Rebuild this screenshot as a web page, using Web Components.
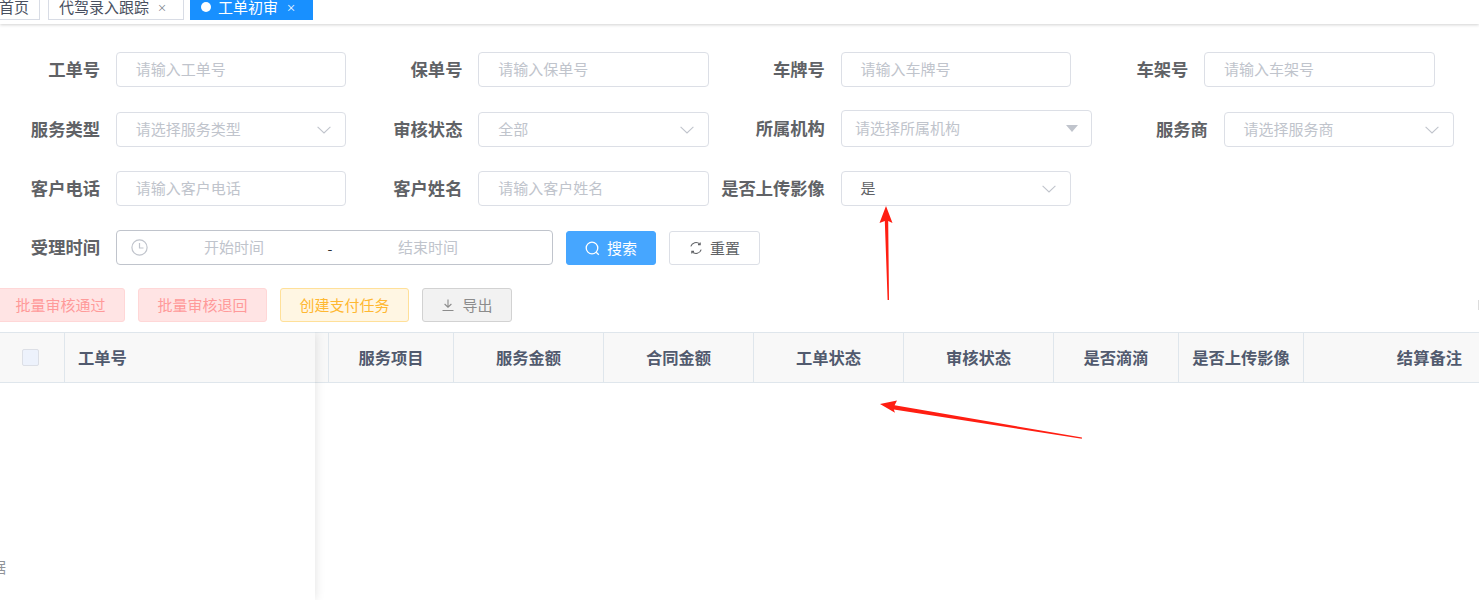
<!DOCTYPE html>
<html lang="zh">
<head>
<meta charset="utf-8">
<title>工单初审</title>
<style>
  html, body { margin: 0; height: 600px; overflow: hidden; background: #fff; }
  body { font-family: "Noto Sans CJK SC", "Noto Sans", sans-serif; font-size: 15px; color: #606266; position: relative; }
  .rows { display: flex; flex-direction: column; gap: 24px; padding-top: 28px; }
  .row { display: flex; align-items: flex-end; }
  .row.tall { margin-top: -1px; }
  .actions { display: flex; gap: 13px; margin: 23px 0 10px -4px; position: relative; }
  .sliver { position: absolute; right: 0; top: 12px; width: 1px; height: 10px; background: #dcdcdc; }
</style>
</head>
<body>
<tab-bar>
  <tab-tag style="margin-right:2px">首页</tab-tag>
  <tab-tag closable>代驾录入跟踪</tab-tag>
  <tab-tag closable active>工单初审</tab-tag>
</tab-bar>

<div class="rows">
  <div class="row">
    <form-item label="工单号"><text-field placeholder="请输入工单号"></text-field></form-item>
    <form-item label="保单号"><text-field placeholder="请输入保单号"></text-field></form-item>
    <form-item label="车牌号" style="margin-right:17px"><text-field placeholder="请输入车牌号"></text-field></form-item>
    <form-item label="车架号"><text-field placeholder="请输入车架号"></text-field></form-item>
  </div>
  <div class="row tall">
    <form-item label="服务类型"><text-field placeholder="请选择服务类型" icon="chevron"></text-field></form-item>
    <form-item label="审核状态"><text-field placeholder="全部" icon="chevron"></text-field></form-item>
    <form-item label="所属机构"><text-field placeholder="请选择所属机构" icon="caret" wide></text-field></form-item>
    <form-item label="服务商"><text-field placeholder="请选择服务商" icon="chevron"></text-field></form-item>
  </div>
  <div class="row">
    <form-item label="客户电话"><text-field placeholder="请输入客户电话"></text-field></form-item>
    <form-item label="客户姓名"><text-field placeholder="请输入客户姓名"></text-field></form-item>
    <form-item label="是否上传影像"><text-field value="是" icon="chevron"></text-field></form-item>
  </div>
  <div class="row">
    <form-item label="受理时间" flush><date-range></date-range></form-item>
    <ui-button kind="primary" icon="search" width="90" style="margin-left:13px">搜索</ui-button>
    <ui-button kind="plain" icon="refresh" width="91" style="margin-left:13px">重置</ui-button>
  </div>
</div>

<div class="actions">
  <ui-button kind="danger" width="129">批量审核通过</ui-button>
  <ui-button kind="danger" width="129">批量审核退回</ui-button>
  <ui-button kind="warning" width="129">创建支付任务</ui-button>
  <ui-button kind="muted" icon="download" width="90">导出</ui-button>
  <span class="sliver"></span>
</div>

<data-table></data-table>

<note-arrows></note-arrows>

<script>
const ICONS = {
  chevron: '<svg width="14" height="8" viewBox="0 0 14 8" fill="none" stroke="#c0c4cc" stroke-width="1.1"><path d="M.6.8 7 7 13.4.8"/></svg>',
  caret: '<svg width="12" height="7" viewBox="0 0 12 7" fill="#c0c4cc"><path d="M0 0h12L6 7z"/></svg>',
  clock: '<svg width="17" height="17" viewBox="0 0 17 17" fill="none" stroke="#c0c4cc" stroke-width="1.2"><circle cx="8.5" cy="8.5" r="7.6"/><path d="M8.5 4v5h4"/></svg>',
  search: '<svg width="15" height="15" viewBox="0 0 15 15" fill="none" stroke="currentColor" stroke-width="1.3"><circle cx="7" cy="7" r="5.8"/><path d="m11.2 11.2 2.6 2.6"/></svg>',
  refresh: '<svg width="14" height="14" viewBox="0 0 14 14" fill="none" stroke="#606266" stroke-width="1.1"><path d="M1.8 5.4A5.4 5.4 0 0 1 10.8 3.2M12.2 8.6A5.4 5.4 0 0 1 3.2 10.8"/><path d="M11.2 1.4v2.2H9M2.8 12.6v-2.2H5"/></svg>',
  download: '<svg width="14" height="14" viewBox="0 0 14 14" fill="none" stroke="currentColor" stroke-width="1.1"><path d="M7 1.5v7.5M3.6 6 7 9.2 10.4 6M1.5 12.5h11"/></svg>'
};

class TabBar extends HTMLElement {
  constructor() {
    super();
    this.attachShadow({ mode: 'open' });
    this.shadowRoot.innerHTML = `
      <style>
        :host { display: block; height: 24px; box-shadow: 0 1px 3px rgba(0,0,0,.18); position: relative; }
        .clip { height: 24px; overflow: hidden; }
        .list { display: flex; gap: 6px; margin: -6px 0 0 -12px; }
      </style>
      <div class="clip"><div class="list"><slot></slot></div></div>
    `;
  }
}

class TabTag extends HTMLElement {
  constructor() {
    super();
    this.attachShadow({ mode: 'open' });
  }

  connectedCallback() {
    const active = this.hasAttribute('active');
    const closable = this.hasAttribute('closable');
    this.shadowRoot.innerHTML = `
      <style>
        :host { display: block; }
        .tag {
          display: flex; align-items: center; box-sizing: border-box; height: 26px;
          padding: 0 ${closable ? 15 : 10}px 0 10px;
          border: 1px solid ${active ? '#1890ff' : '#d8dce5'};
          background: ${active ? '#1890ff' : '#fff'};
          color: ${active ? '#fff' : '#495060'};
          font-size: 15px; line-height: 24px;
        }
        .dot { width: 10px; height: 10px; border-radius: 50%; background: #fff; margin-right: 7px; }
        .close { font-size: 12px; margin-left: 7px; transform: scale(.8); color: ${active ? '#fff' : '#7a7f8a'}; }
      </style>
      <div class="tag">
        ${active ? '<span class="dot"></span>' : ''}
        <slot></slot>
        ${closable ? '<span class="close">×</span>' : ''}
      </div>
    `;
  }
}

class FormItem extends HTMLElement {
  constructor() {
    super();
    this.attachShadow({ mode: 'open' });
  }

  connectedCallback() {
    this.shadowRoot.innerHTML = `
      <style>
        :host { display: flex; align-items: center; margin-right: ${this.hasAttribute('flush') ? 0 : 16}px; }
        .label {
          width: 100px; margin-right: 16px; padding-bottom: 2px; display: flex; justify-content: flex-end;
          white-space: nowrap; font-size: 17.3px; font-weight: 700; color: #606266; line-height: 33px;
        }
      </style>
      <div class="label">${this.getAttribute('label')}</div>
      <slot></slot>
    `;
  }
}

class TextField extends HTMLElement {
  constructor() {
    super();
    this.attachShadow({ mode: 'open' });
  }

  connectedCallback() {
    const wide = this.hasAttribute('wide');
    const value = this.getAttribute('value');
    const icon = this.getAttribute('icon');
    this.shadowRoot.innerHTML = `
      <style>
        :host { display: block; }
        .box {
          display: flex; align-items: center; justify-content: space-between; box-sizing: border-box;
          width: ${wide ? 251 : 230.45}px; height: ${wide ? 37 : 35}px;
          padding: 0 ${wide ? 13 : 14}px 0 ${wide ? 13 : 18.7}px;
          border: 1px solid #dcdfe6; border-radius: 4px; background: #fff;
          font-size: 15px; color: ${value ? '#606266' : '#c0c4cc'};
        }
        span { position: relative; top: -1px; }
        svg { display: block; }
      </style>
      <div class="box">
        <span>${value || this.getAttribute('placeholder')}</span>
        ${icon ? ICONS[icon] : ''}
      </div>
    `;
  }
}

class DateRange extends HTMLElement {
  constructor() {
    super();
    this.attachShadow({ mode: 'open' });
    this.shadowRoot.innerHTML = `
      <style>
        :host { display: block; }
        .box {
          display: flex; align-items: center; box-sizing: border-box; width: 437px; height: 35px;
          padding-left: 14px; border: 1px solid #c0c4cc; border-radius: 4px; font-size: 15px; color: #c0c4cc;
        }
        svg { display: block; }
        .part { text-align: center; position: relative; top: -1px; }
        .dash { width: 20px; text-align: center; color: #303133; font-size: 14px; }
      </style>
      <div class="box">
        ${ICONS.clock}
        <span class="part" style="width:172px">开始时间</span>
        <span class="dash">-</span>
        <span class="part" style="width:176px">结束时间</span>
      </div>
    `;
  }
}

class UiButton extends HTMLElement {
  constructor() {
    super();
    this.attachShadow({ mode: 'open' });
  }

  connectedCallback() {
    const themes = {
      primary: 'background:#46a6ff;border-color:#46a6ff;color:#fff;',
      plain: 'background:#fff;border-color:#dcdfe6;color:#606266;',
      danger: 'background:#ffe4e4;border-color:#ffd7d7;color:#ff9a9a;',
      warning: 'background:#fff6e3;border-color:#ffe099;color:#ffb832;',
      muted: 'background:#f2f2f2;border-color:#d2d2d2;color:#8c8c8c;'
    };
    const icon = this.getAttribute('icon');
    this.shadowRoot.innerHTML = `
      <style>
        :host { display: block; flex: none; }
        .btn {
          display: flex; align-items: center; justify-content: center; gap: 7px; box-sizing: border-box;
          width: ${this.getAttribute('width')}px; height: 34px; border: 1px solid; border-radius: 3px;
          font-size: 15px; white-space: nowrap; ${themes[this.getAttribute('kind')]}
        }
        .label { position: relative; top: -1px; }
        svg { display: block; }
      </style>
      <div class="btn">${icon ? ICONS[icon] : ''}<span class="label"><slot></slot></span></div>
    `;
  }
}

class DataTable extends HTMLElement {
  constructor() {
    super();
    this.attachShadow({ mode: 'open' });
  }

  connectedCallback() {
    const cols = [
      ['服务项目', 125], ['服务金额', 150], ['合同金额', 150], ['工单状态', 150],
      ['审核状态', 150], ['是否滴滴', 125], ['是否上传影像', 125]
    ];
    this.shadowRoot.innerHTML = `
      <style>
        :host { display: flex; height: 268px; overflow: hidden; font-size: 16.3px; }
        .head {
          display: flex; box-sizing: border-box; height: 51px; background: #f8f8f8;
          border-top: 1px solid #dfe6ec; border-bottom: 1px solid #dfe6ec;
          color: #515a6e; font-weight: 700;
        }
        .cell {
          display: flex; align-items: center; justify-content: center; box-sizing: border-box;
          flex: none; padding-bottom: 2px; border-right: 1px solid #dfe6ec; white-space: nowrap;
        }
        .fixed {
          flex: none; width: 315px; background: #fff; position: relative; z-index: 1;
          box-shadow: 0 0 10px rgba(0,0,0,.12);
        }
        .main { flex: 1; min-width: 0; }
        .box {
          width: 17px; height: 17px; box-sizing: border-box; background: #edf2fc;
          border: 1px solid #dcdfe6; border-radius: 2px; margin: 2px 3px 0 0;
        }
        .empty { padding-top: 174px; margin-left: -54px; font-size: 15px; color: #909399; white-space: nowrap; line-height: 20px; }
      </style>
      <div class="fixed">
        <div class="head">
          <div class="cell" style="width:65px"><div class="box"></div></div>
          <div class="cell" style="width:250px;justify-content:flex-start;padding-left:13px;border-right:0">工单号</div>
        </div>
        <div class="empty">暂无数据</div>
      </div>
      <div class="main">
        <div class="head">
          <div class="cell" style="width:14px"></div>
          ${cols.map(([name, w]) => `<div class="cell" style="width:${w}px">${name}</div>`).join('')}
          <div class="cell" style="flex:1;justify-content:flex-end;padding-right:17px;border-right:0">结算备注</div>
        </div>
      </div>
    `;
  }
}

// red markers drawn on top of the screenshot
class NoteArrows extends HTMLElement {
  constructor() {
    super();
    this.attachShadow({ mode: 'open' });
    this.shadowRoot.innerHTML = `
      <style>
        :host { position: absolute; left: 0; top: 0; width: 1479px; height: 600px; pointer-events: none; z-index: 5; }
        svg { display: block; }
      </style>
      <svg width="1479" height="600" fill="#ff1e12">
        <polygon points="886,206 892.5,223 888.2,221 889,300 887.6,300 884.8,221 879.5,223"/>
        <polygon points="880,404 897,400.5 894.6,405.2 1082,437.6 1081.8,438.8 893.8,409.4 895,412.8"/>
      </svg>
    `;
  }
}

customElements.define('tab-bar', TabBar);
customElements.define('tab-tag', TabTag);
customElements.define('form-item', FormItem);
customElements.define('text-field', TextField);
customElements.define('date-range', DateRange);
customElements.define('ui-button', UiButton);
customElements.define('data-table', DataTable);
customElements.define('note-arrows', NoteArrows);
</script>
</body>
</html>
